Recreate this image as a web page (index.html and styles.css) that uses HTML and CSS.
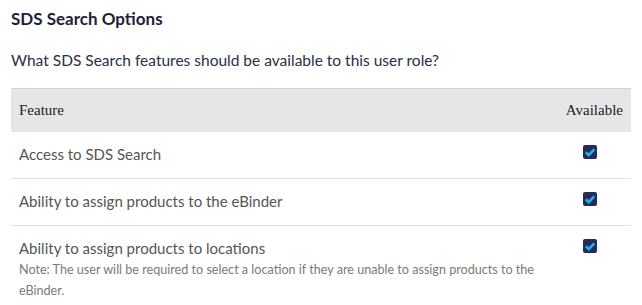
FILE: index.html
```html
<!DOCTYPE html>
<html lang="en">
<head>
	<meta charset="UTF-8">
	<title>SDS Search Options</title>
	<link rel="stylesheet" href="styles.css">
</head>
<body>
	<div class="panel">
		<h2 class="title">SDS Search Options</h2>
		<p class="intro">What SDS Search features should be available to this user role?</p>
		<table class="features">
			<thead>
				<tr>
					<th class="col-feature">Feature</th>
					<th class="col-available">Available</th>
				</tr>
			</thead>
			<tbody>
				<tr>
					<td class="col-feature">Access to SDS Search</td>
					<td class="col-available"><span class="check"><svg viewBox="0 0 14 14"><path d="M2.8 7.3l2.9 2.8 5.6-5.8"/></svg></span></td>
				</tr>
				<tr>
					<td class="col-feature">Ability to assign products to the eBinder</td>
					<td class="col-available"><span class="check"><svg viewBox="0 0 14 14"><path d="M2.8 7.3l2.9 2.8 5.6-5.8"/></svg></span></td>
				</tr>
				<tr class="last">
					<td class="col-feature">Ability to assign products to locations
						<div class="note">Note: The user will be required to select a location if they are unable to assign products to the eBinder.</div>
					</td>
					<td class="col-available"><span class="check"><svg viewBox="0 0 14 14"><path d="M2.8 7.3l2.9 2.8 5.6-5.8"/></svg></span></td>
				</tr>
			</tbody>
		</table>
	</div>
</body>
</html>
```

FILE: styles.css
```css
*{padding: 0px;margin: 0px;box-sizing: border-box;}
body{background: #fff;font-family: Lato, "Noto Sans", sans-serif;}
.panel{padding: 8px 11px 0 11px;}
.title{font-size: 17px;font-weight: 700;color: #1e2139;line-height: 22px;height: 22px;}
.intro{margin-top: 20px;font-size: 15.5px;color: #2b2e45;line-height: 20px;}
.features{margin-top: 18px;width: 620px;border-collapse: collapse;table-layout: fixed;}
.features th{background: #e6e6e6;border-top: 1px solid #d3d1e0;height: 43px;font-family: "Liberation Serif", serif;font-weight: 400;font-size: 15px;color: #222;text-align: left;padding: 0 8px;}
.features th.col-available{text-align: right;}
.features td{font-size: 15px;color: #555;padding: 12px 8px 14px 8px;border-bottom: 1px solid #e0e0e0;vertical-align: top;line-height: 20px;}
.features tr.last td{border-bottom: none;}
.features .col-available{width: 80px;}
.features td.col-available{text-align: right;padding-right: 34px;}
.note{font-size: 12.6px;color: #7a7a7a;line-height: 21px;margin-top: 1px;}
.check{display: inline-block;width: 14px;height: 14px;border-radius: 2px;background: #272b5c;vertical-align: top;margin-top: 1px;}
.check svg{display: block;width: 14px;height: 14px;fill: none;stroke: #1ab4e8;stroke-width: 2.6;}
```
